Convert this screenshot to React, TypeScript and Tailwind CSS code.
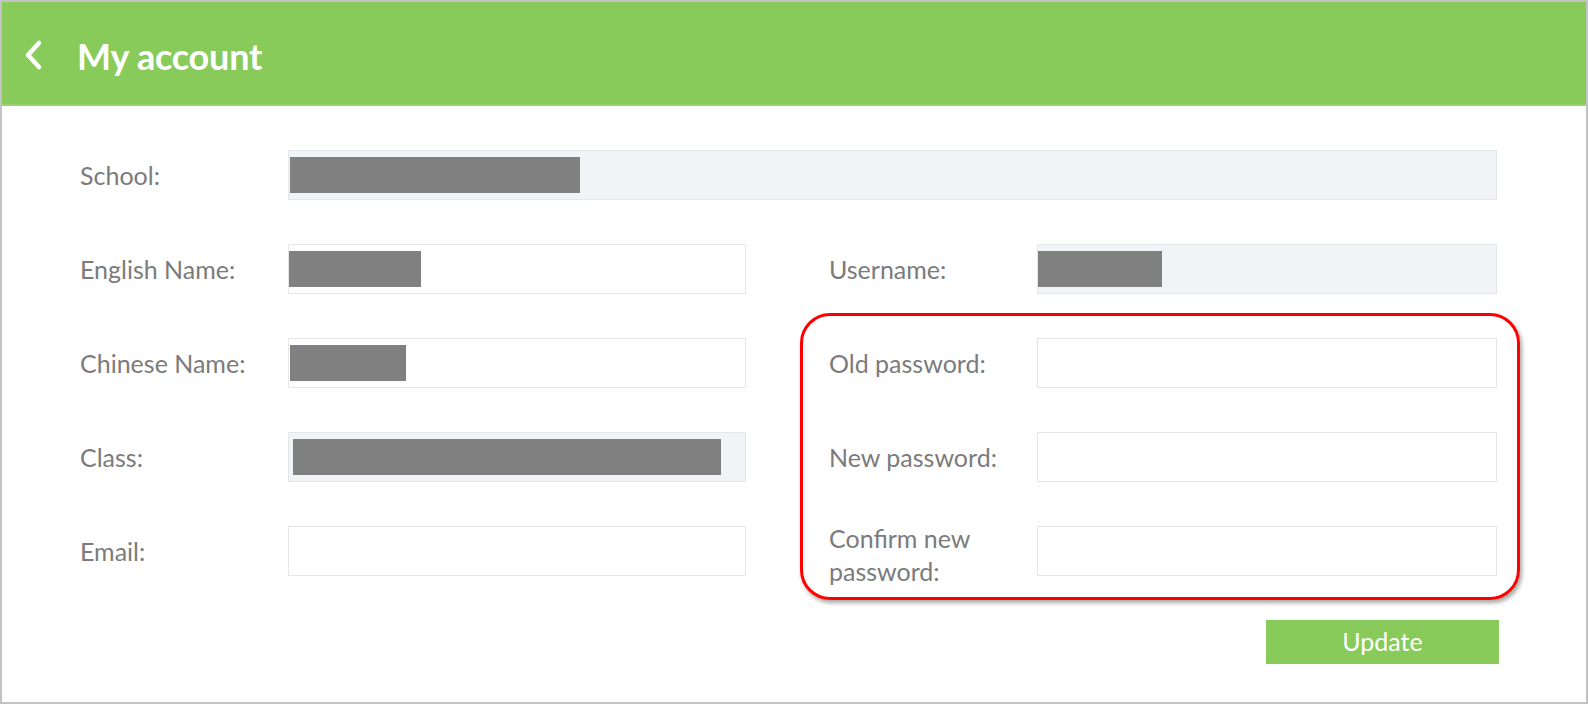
import React from 'react'

const font = { fontFamily: 'Lato, "Open Sans", sans-serif' }

type FieldProps = {
  label: React.ReactNode
  readOnly?: boolean
  redact?: string
}

// redact = tailwind classes for the grey blocked-out value
const Field: React.FC<FieldProps> = ({ label, readOnly, redact }) => (
  <div className="flex items-center h-[50px]">
    <div className="w-[208px] shrink-0 text-[25px] leading-[33px] text-[#7b7b7b] -ml-[1px] pr-[1px]">{label}</div>
    <div
      className={
        'flex-1 h-full border border-[#e4e6ea] flex items-center ' +
        (readOnly ? 'bg-[#f2f3f7]' : 'bg-white')
      }
    >
      {redact && <div className={'bg-[#808080] h-[36px] ' + redact} />}
    </div>
  </div>
)

export default function App() {
  return (
    <div className="relative w-[1588px] h-[704px] border-2 border-[#c3c3c3] bg-white overflow-hidden" style={font}>
      {/* Header */}
      <div className="h-[104px] bg-[#88cb5b] flex items-center border-b-2 border-[#9ad470]">
        <svg className="ml-[20px] mt-[4px]" width="24" height="32" viewBox="0 0 24 32" fill="none">
          <path d="M17 4 L6 16 L17 28" stroke="white" strokeWidth="4.5" strokeLinecap="round" strokeLinejoin="round" />
        </svg>
        <h1 className="ml-[31px] mt-[6px] text-[36px] font-bold text-white tracking-[-0.2px]">My account</h1>
      </div>

      {/* Form */}
      <div className="pl-[79px] pr-[89px] pt-[44px]">
        <Field label="School:" readOnly redact="w-[290px] ml-[1px]" />

        <div className="grid grid-cols-[665px_667px] gap-x-[84px] gap-y-[44px] mt-[44px]">
          <Field label="English Name:" redact="w-[132px]" />
          <Field label="Username:" readOnly redact="w-[124px]" />
          <Field label="Chinese Name:" redact="w-[116px] ml-[1px]" />
          <Field label="Old password:" />
          <Field label="Class:" readOnly redact="w-[428px] ml-[4px]" />
          <Field label="New password:" />
          <Field label="Email:" />
          <Field
            label={
              <span className="block pt-[8px]">
                Confirm new
                <br />
                password:
              </span>
            }
          />
        </div>

        <div className="flex justify-end mt-[44px] -mr-[2px]">
          <button className="w-[233px] h-[44px] bg-[#88cb5b] text-white text-[25px]">Update</button>
        </div>
      </div>

      {/* annotation */}
      <div className="absolute left-[798px] top-[311px] w-[720px] h-[287px] border-[3px] border-[#ff0000] rounded-[30px] shadow-[2px_3px_4px_rgba(0,0,0,0.35)] pointer-events-none" />
    </div>
  )
}
